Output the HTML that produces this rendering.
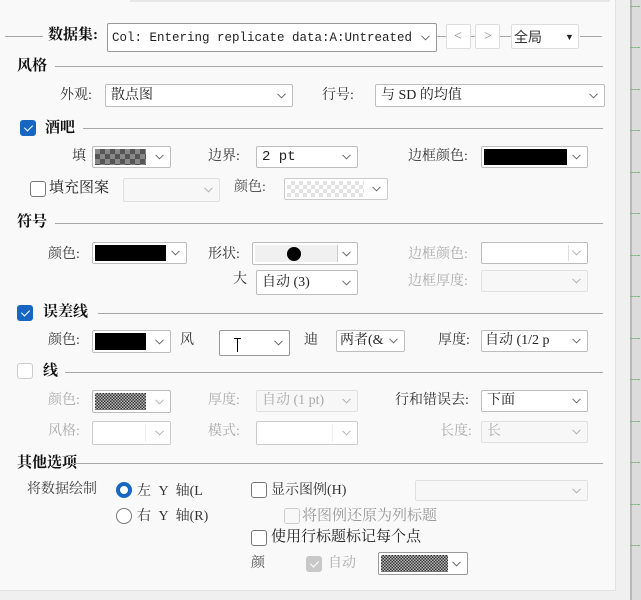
<!DOCTYPE html>
<html><head><meta charset="utf-8"><style>
*{margin:0;padding:0;box-sizing:border-box}
body{width:641px;height:600px;overflow:hidden;background:#f0f0f0;font-family:"Liberation Serif","Noto Serif CJK SC","Noto Sans CJK SC",serif;font-size:14px;color:#222;position:relative}
.a{position:absolute;white-space:nowrap;line-height:18px}
.panel{position:absolute;left:0;top:0;width:616px;height:591px;background:#f9f9f9;border-right:1px solid #e2e2e2;border-bottom:1px solid #e2e2e2}
.hl{position:absolute;height:1px;background:#a8a8a8}
.b{font-weight:bold;color:#111}
.sel{position:absolute;background:#fff;border:1px solid #bdbdbd;border-radius:2px;overflow:hidden}
.sel.dis{background:#f7f7f7;border-color:#e0e0e0}
.sel .t{position:absolute;left:5px;top:50%;transform:translateY(-50%);line-height:18px;white-space:nowrap}
.sel svg{position:absolute;right:6px;top:50%;margin-top:-3px}
.sw{position:absolute;left:2px;top:2px;bottom:2px}
.cb{position:absolute;width:16px;height:16px;border:1px solid #777;border-radius:3px;background:#fff}
.cb.on{background:#1767c2;border-color:#1767c2}
.cb.on:after{content:"";position:absolute;left:5px;top:2px;width:4px;height:7px;border:solid #fff;border-width:0 1.3px 1.3px 0;transform:rotate(45deg)}
.cb.dis{border-color:#ccc;background:#f8f8f8}
.chk{background-image:repeating-conic-gradient(#555 0 25%,#888 0 50%);background-size:10px 10px}
.chk2{background-image:repeating-conic-gradient(#e2e2e2 0 25%,#fff 0 50%);background-size:8px 8px}
.chk3{background-image:repeating-conic-gradient(#333 0 25%,#bbb 0 50%);background-size:3px 3px}
.mono{font-family:"Liberation Mono","Noto Sans CJK SC",monospace}
.dash{position:absolute;left:630px;width:10px;height:0;border-top:1px dashed #7fb87f}
</style></head><body>
<div style="position:absolute;left:630px;top:0;width:2px;height:600px;background:#b8b8b8"></div>
<div style="position:absolute;left:632px;top:0;width:9px;height:600px;background:#dcdcdc"></div>
<div class="dash" style="top:6px"></div><div class="dash" style="top:47px"></div><div class="dash" style="top:89px"></div><div class="dash" style="top:130px"></div><div class="dash" style="top:172px"></div><div class="dash" style="top:213px"></div><div class="dash" style="top:255px"></div><div class="dash" style="top:296px"></div><div class="dash" style="top:338px"></div><div class="dash" style="top:379px"></div><div class="dash" style="top:421px"></div><div class="dash" style="top:462px"></div><div class="dash" style="top:504px"></div><div class="dash" style="top:545px"></div>
<div class="panel"></div>
<div style="position:absolute;left:130px;top:0;width:480px;height:2px;background:#e6e6e6"></div>

<svg width="0" height="0" style="position:absolute"><defs><symbol id="cv" viewBox="0 0 9 6"><path d="M0.5 0.8 L4.5 4.8 L8.5 0.8" fill="none" stroke="#666" stroke-width="1"/></symbol></defs></svg>

<div class="hl" style="left:5px;top:36px;width:38px"></div>
<div class="a b" style="left:48px;top:26px;font-size:15px">数据集:</div>
<div class="sel" style="left:107px;top:23px;width:330px;height:29px;border-color:#999"><span class="t mono" style="font-size:12.5px;left:4px">Col: Entering replicate data:A:Untreated</span><svg width="9" height="6"><use href="#cv"/></svg></div>
<div class="hl" style="left:437px;top:36px;width:9px"></div>
<div class="sel" style="left:446px;top:24px;width:25px;height:25px;border-color:#ddd"><span class="t" style="left:7px;color:#888">&lt;</span></div>
<div class="hl" style="left:471px;top:36px;width:4px"></div>
<div class="sel" style="left:475px;top:24px;width:25px;height:25px;border-color:#ddd"><span class="t" style="left:8px;color:#888">&gt;</span></div>
<div class="hl" style="left:500px;top:36px;width:11px"></div>
<div class="sel" style="left:511px;top:24px;width:68px;height:25px;border-color:#ddd"><span class="t" style="left:2px;font-family:'Noto Sans CJK SC',sans-serif;color:#333">全局</span><span class="t" style="left:53px;font-size:9px">▼</span></div>
<div class="hl" style="left:580px;top:36px;width:22px"></div>

<div class="a b" style="left:17px;top:57px;font-size:15px">风格</div>
<div class="hl" style="left:55px;top:66px;width:548px"></div>
<div class="a" style="left:60px;top:87px;color:#333">外观:</div>
<div class="sel" style="left:105px;top:84px;width:188px;height:23px"><span class="t">散点图</span><svg width="9" height="6"><use href="#cv"/></svg></div>
<div class="a" style="left:322px;top:87px;color:#333">行号:</div>
<div class="sel" style="left:375px;top:84px;width:230px;height:23px"><span class="t">与 SD 的均值</span><svg width="9" height="6"><use href="#cv"/></svg></div>

<div class="cb on" style="left:20px;top:120px"></div>
<div class="a b" style="left:45px;top:119px;font-size:15px">酒吧</div>
<div class="hl" style="left:83px;top:128px;width:520px"></div>
<div class="a" style="left:72px;top:148px;color:#333">填</div>
<div class="sel" style="left:92px;top:146px;width:79px;height:22px"><div class="sw chk" style="right:24px"></div><svg width="9" height="6"><use href="#cv"/></svg></div>
<div class="a" style="left:208px;top:148px;color:#333">边界:</div>
<div class="sel" style="left:256px;top:146px;width:102px;height:22px"><span class="t mono">2 pt</span><svg width="9" height="6"><use href="#cv"/></svg></div>
<div class="a" style="left:408px;top:148px;color:#333">边框颜色:</div>
<div class="sel" style="left:481px;top:146px;width:107px;height:22px"><div class="sw" style="right:20px;background:#000"></div><svg width="9" height="6"><use href="#cv"/></svg></div>
<div class="cb" style="left:30px;top:181px"></div>
<div class="a" style="left:49px;top:179px;font-size:15px;color:#222">填充图案</div>
<div class="sel dis" style="left:123px;top:178px;width:97px;height:24px"><svg width="9" height="6" style="opacity:.5"><use href="#cv"/></svg></div>
<div class="a" style="left:234px;top:179px;color:#444">颜色:</div>
<div class="sel" style="left:284px;top:178px;width:104px;height:22px;border-color:#ccc"><div class="sw chk2" style="right:23px"></div><svg width="9" height="6"><use href="#cv"/></svg></div>

<div class="a b" style="left:17px;top:213px;font-size:15px">符号</div>
<div class="hl" style="left:55px;top:223px;width:548px"></div>
<div class="a" style="left:48px;top:246px;color:#333">颜色:</div>
<div class="sel" style="left:92px;top:242px;width:95px;height:22px"><div class="sw" style="right:20px;background:#000"></div><svg width="9" height="6"><use href="#cv"/></svg></div>
<div class="a" style="left:208px;top:246px;color:#333">形状:</div>
<div class="sel" style="left:252px;top:242px;width:106px;height:23px"><div class="sw" style="right:19px;background:#f0f0f0;border-right:1px solid #ccc"></div><div style="position:absolute;left:34px;top:4px;width:14px;height:14px;border-radius:50%;background:#000"></div><svg width="9" height="6"><use href="#cv"/></svg></div>
<div class="a" style="left:408px;top:246px;color:#aaa">边框颜色:</div>
<div class="sel" style="left:481px;top:242px;width:107px;height:22px;border-color:#bbb"><div class="sw" style="right:18px;border-right:1px solid #ddd"></div><svg width="9" height="6" style="opacity:.5"><use href="#cv"/></svg></div>
<div class="a" style="left:233px;top:271px;color:#333">大</div>
<div class="sel" style="left:256px;top:270px;width:102px;height:25px"><span class="t">自动 (3)</span><svg width="9" height="6"><use href="#cv"/></svg></div>
<div class="a" style="left:408px;top:273px;color:#aaa">边框厚度:</div>
<div class="sel dis" style="left:481px;top:270px;width:107px;height:22px"><svg width="9" height="6" style="opacity:.5"><use href="#cv"/></svg></div>

<div class="cb on" style="left:17px;top:305px"></div>
<div class="a b" style="left:43px;top:303px;font-size:15px">误差线</div>
<div class="hl" style="left:98px;top:313px;width:505px"></div>
<div class="a" style="left:48px;top:332px;color:#333">颜色:</div>
<div class="sel" style="left:92px;top:330px;width:79px;height:23px"><div class="sw" style="right:24px;background:#000"></div><svg width="9" height="6"><use href="#cv"/></svg></div>
<div class="a" style="left:180px;top:332px;color:#333">风</div>
<div class="sel" style="left:219px;top:330px;width:71px;height:26px;border-color:#999"><div style="position:absolute;left:17px;top:7px;width:1px;height:14px;background:#000"></div><div style="position:absolute;left:14px;top:7px;width:7px;height:1px;background:#000"></div><svg width="9" height="6"><use href="#cv"/></svg></div>
<div class="a" style="left:304px;top:332px;color:#333">迪</div>
<div class="sel" style="left:336px;top:330px;width:69px;height:22px"><span class="t" style="left:3px">两者(&amp;</span><svg width="9" height="6" style="background:#fff"><use href="#cv"/></svg></div>
<div class="a" style="left:438px;top:332px;color:#333">厚度:</div>
<div class="sel" style="left:481px;top:330px;width:107px;height:22px"><span class="t" style="left:3px">自动 (1/2 p</span><svg width="9" height="6" style="background:#fff"><use href="#cv"/></svg></div>

<div class="cb" style="left:17px;top:363px;border-color:#ccc"></div>
<div class="a b" style="left:43px;top:362px;font-size:15px">线</div>
<div class="hl" style="left:65px;top:372px;width:538px"></div>
<div class="a" style="left:48px;top:392px;color:#aaa">颜色:</div>
<div class="sel" style="left:92px;top:390px;width:79px;height:23px"><div class="sw chk3" style="right:24px"></div><svg width="9" height="6" style="opacity:.5"><use href="#cv"/></svg></div>
<div class="a" style="left:208px;top:392px;color:#aaa">厚度:</div>
<div class="sel dis" style="left:256px;top:390px;width:102px;height:22px"><span class="t" style="color:#aaa">自动 (1 pt)</span><svg width="9" height="6" style="opacity:.5"><use href="#cv"/></svg></div>
<div class="a" style="left:395px;top:392px;color:#333">行和错误去:</div>
<div class="sel" style="left:481px;top:390px;width:107px;height:22px"><span class="t">下面</span><svg width="9" height="6"><use href="#cv"/></svg></div>
<div class="a" style="left:48px;top:423px;color:#aaa">风格:</div>
<div class="sel" style="left:92px;top:421px;width:79px;height:24px;border-color:#ccc"><div class="sw" style="right:24px;border-right:1px solid #eee"></div><svg width="9" height="6" style="opacity:.5"><use href="#cv"/></svg></div>
<div class="a" style="left:208px;top:423px;color:#aaa">模式:</div>
<div class="sel" style="left:256px;top:421px;width:102px;height:24px;border-color:#ccc"><div class="sw" style="right:24px;border-right:1px solid #eee"></div><svg width="9" height="6" style="opacity:.5"><use href="#cv"/></svg></div>
<div class="a" style="left:440px;top:423px;color:#aaa">长度:</div>
<div class="sel dis" style="left:481px;top:421px;width:107px;height:22px"><span class="t" style="color:#aaa">长</span><svg width="9" height="6" style="opacity:.5"><use href="#cv"/></svg></div>

<div class="a b" style="left:17px;top:454px;font-size:15px">其他选项</div>
<div class="hl" style="left:70px;top:463px;width:533px"></div>
<div class="a" style="left:27px;top:481px;color:#444">将数据绘制</div>
<div style="position:absolute;left:116px;top:482px;width:16px;height:16px;border-radius:50%;border:4.5px solid #1767c2;background:#fff"></div>
<div class="a" style="left:137px;top:483px;color:#333;word-spacing:4px">左 Y 轴(L</div>
<div style="position:absolute;left:116px;top:508px;width:16px;height:16px;border-radius:50%;border:1px solid #777;background:#fff"></div>
<div class="a" style="left:137px;top:508px;color:#333;word-spacing:4px">右 Y 轴(R)</div>
<div class="cb" style="left:251px;top:482px"></div>
<div class="a" style="left:271px;top:482px;color:#333">显示图例(H)</div>
<div class="sel dis" style="left:415px;top:480px;width:173px;height:21px"><svg width="9" height="6" style="opacity:.5"><use href="#cv"/></svg></div>
<div class="cb dis" style="left:284px;top:508px"></div>
<div class="a" style="left:302px;top:507px;color:#999;font-size:15px">将图例还原为列标题</div>
<div class="cb" style="left:251px;top:530px"></div>
<div class="a" style="left:271px;top:528px;color:#222;font-size:15px">使用行标题标记每个点</div>
<div class="a" style="left:251px;top:555px;color:#444">颜</div>
<div class="cb on" style="left:306px;top:556px;background:#c8c8c8;border-color:#c8c8c8"></div>
<div class="a" style="left:328px;top:555px;color:#aaa">自动</div>
<div class="sel" style="left:378px;top:552px;width:90px;height:23px;border-color:#999"><div class="sw chk3" style="right:19px"></div><svg width="9" height="6"><use href="#cv"/></svg></div>
</body></html>
